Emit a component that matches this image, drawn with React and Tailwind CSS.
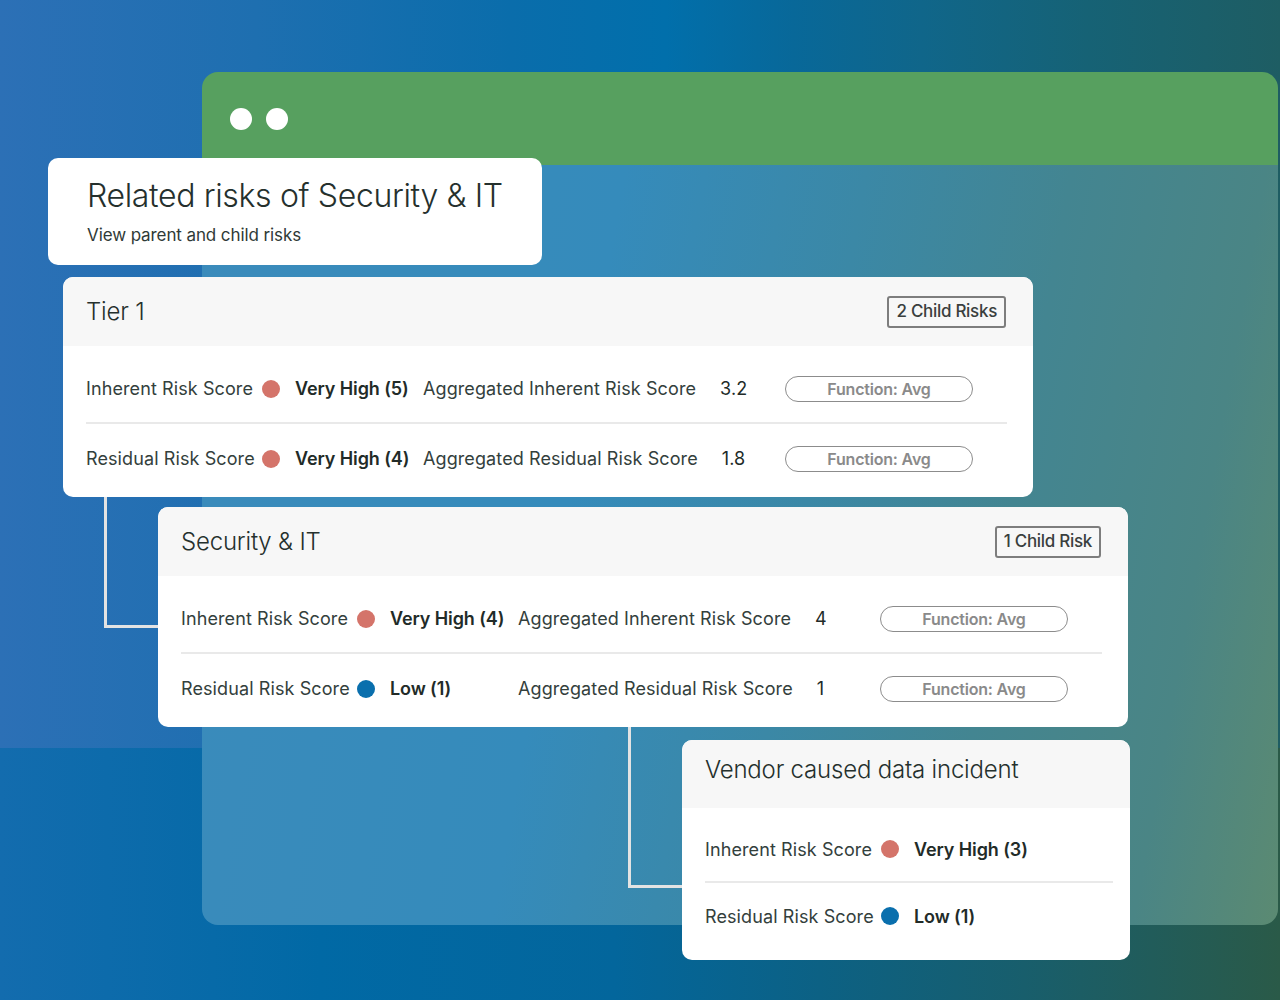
const ROWS_TIER = [
  { label: 'Inherent Risk Score', dot: 'bg-[#d4746a]', value: 'Very High (5)', agg: 'Aggregated Inherent Risk Score', aggValue: '3.2' },
  { label: 'Residual Risk Score', dot: 'bg-[#d4746a]', value: 'Very High (4)', agg: 'Aggregated Residual Risk Score', aggValue: '1.8' },
];

const ROWS_SEC = [
  { label: 'Inherent Risk Score', dot: 'bg-[#d4746a]', value: 'Very High (4)', agg: 'Aggregated Inherent Risk Score', aggValue: '4' },
  { label: 'Residual Risk Score', dot: 'bg-[#0a6fad]', value: 'Low (1)', agg: 'Aggregated Residual Risk Score', aggValue: '1' },
];

const ROWS_VENDOR = [
  { label: 'Inherent Risk Score', dot: 'bg-[#d4746a]', value: 'Very High (3)' },
  { label: 'Residual Risk Score', dot: 'bg-[#0a6fad]', value: 'Low (1)' },
];

function ScoreRow({ row, last, short }) {
  return (
    <div className={`flex items-center ${short ? 'h-[66px]' : 'h-[69px]'} ${last ? '' : 'border-b-2 border-[#e9e9e9]'}`}>
      <span className="w-[176px] shrink-0 text-[18px] text-[#33403c] tracking-[0.1px]">{row.label}</span>
      <span className={`w-[18px] h-[18px] rounded-full shrink-0 ${row.dot}`} />
      <span className="w-[128px] ml-[15px] shrink-0 text-[18px] font-semibold text-[#222b28] tracking-[-0.1px]">{row.value}</span>
      {row.agg && (
        <>
          <span className="w-[362px] shrink-0 flex items-center text-[18px] text-[#33403c] tracking-[0.1px]">
            {row.agg}
            <span className="ml-[24px] text-[#222b28]">{row.aggValue}</span>
          </span>
          <span className="w-[188px] h-[26px] shrink-0 rounded-full border-[1.5px] border-[#8c8c8c] flex items-center justify-center text-[16px] font-semibold text-[#8a8a8a] tracking-[-0.2px]">
            Function: Avg
          </span>
        </>
      )}
    </div>
  );
}

function RiskCard({ title, badge, rows, className }) {
  return (
    <div className={`absolute w-[970px] h-[220px] rounded-[10px] bg-white overflow-hidden flex flex-col ${className}`}>
      <div className="h-[69px] bg-[#f7f7f7] flex items-center justify-between pl-[23px] pr-[27px]">
        <span className="text-[24px] font-light text-[#25302d] tracking-[-0.2px]">{title}</span>
        <span className="h-[32px] px-[7px] border-2 border-[#7d7d7d] rounded-[3px] flex items-center text-[17px] font-medium text-[#3a3f3e] tracking-[-0.3px]">
          {badge}
        </span>
      </div>
      <div className="pl-[23px] pr-[26px] pt-[9px]">
        {rows.map((r, i) => (
          <ScoreRow key={i} row={r} last={i === rows.length - 1} />
        ))}
      </div>
    </div>
  );
}

export default function App() {
  return (
    <div className="relative w-[1280px] h-[1000px] overflow-hidden font-['Inter',sans-serif]">
      {/* background bands */}
      <div className="absolute inset-0 flex flex-col">
        <div className="h-[748px] bg-[linear-gradient(90deg,#2c70b6_0%,#1e6fb0_20%,#0a6dab_40%,#016fab_52%,#086899_62%,#10668a_72%,#166275_85%,#1e5d63_100%)]" />
        <div className="flex-1 bg-[linear-gradient(90deg,#136cae_0%,#0169a5_25%,#03669c_48%,#0c6184_64%,#185e6c_80%,#2a5a48_100%)]" />
      </div>

      {/* browser window */}
      <div className="absolute left-[202px] top-[72px] w-[1076px] h-[853px] rounded-[16px] overflow-hidden flex flex-col">
        <div className="h-[93px] shrink-0 bg-[#57a05f] flex items-center gap-[14px] pl-[28px]">
          <span className="w-[22px] h-[22px] rounded-full bg-white" />
          <span className="w-[22px] h-[22px] rounded-full bg-white" />
        </div>
        <div className="flex-1 bg-[linear-gradient(100deg,#3b8bbb_0%,#358bbb_35%,#3b88a6_55%,#438591_72%,#4a8585_88%,#5b8a72_100%)]" />
      </div>

      {/* connector lines */}
      <div className="absolute left-[104px] top-[490px] w-[56px] h-[138px] border-l-[3px] border-b-[3px] border-[#e3e3e3]" />
      <div className="absolute left-[628px] top-[720px] w-[56px] h-[168px] border-l-[3px] border-b-[3px] border-[#e3e3e3]" />

      {/* heading card */}
      <div className="absolute left-[48px] top-[158px] w-[494px] h-[107px] rounded-[10px] bg-white flex flex-col pl-[39px] pt-[18px]">
        <span className="text-[32px] font-light text-[#25302d] leading-[40px] tracking-[-0.35px]">Related risks of Security &amp; IT</span>
        <span className="text-[17px] text-[#2f3a37] mt-[7px] tracking-[-0.1px]">View parent and child risks</span>
      </div>

      <RiskCard title="Tier 1" badge="2 Child Risks" rows={ROWS_TIER} className="left-[63px] top-[277px]" />
      <RiskCard title="Security & IT" badge="1 Child Risk" rows={ROWS_SEC} className="left-[158px] top-[507px]" />

      {/* vendor card */}
      <div className="absolute left-[682px] top-[740px] w-[448px] h-[220px] rounded-[10px] bg-white overflow-hidden flex flex-col">
        <div className="h-[68px] bg-[#f7f7f7] flex items-start pl-[23px] pt-[12px]">
          <span className="text-[24px] font-light text-[#25302d] tracking-[-0.2px]">Vendor caused data incident</span>
        </div>
        <div className="pl-[23px] pr-[17px] pt-[9px]">
          {ROWS_VENDOR.map((r, i) => (
            <ScoreRow key={i} row={r} short last={i === ROWS_VENDOR.length - 1} />
          ))}
        </div>
      </div>
    </div>
  );
}
